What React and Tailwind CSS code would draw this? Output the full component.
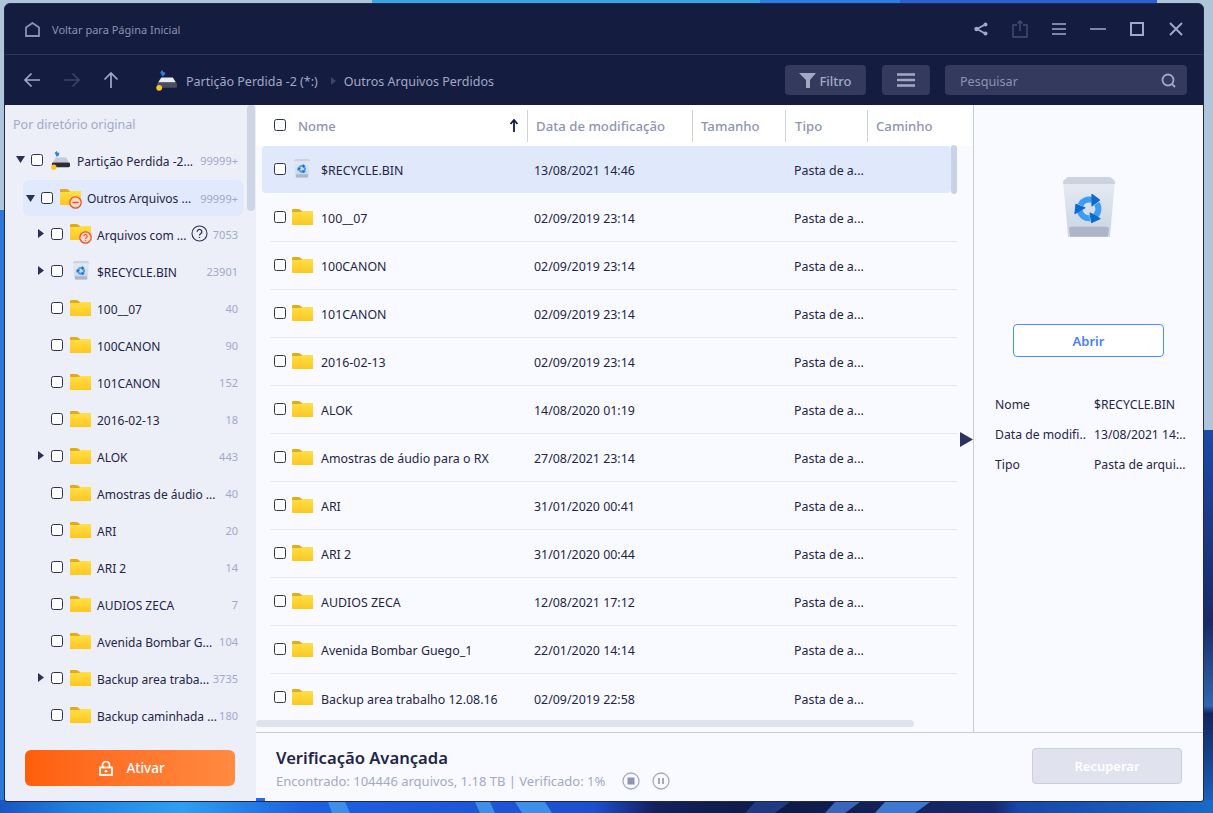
import React from 'react'

const font = { fontFamily: '"Noto Sans", sans-serif' }

const treeRows = [
  { name: 'Arquivos com ...', count: '7053', arrow: true, icon: 'question', help: true },
  { name: '$RECYCLE.BIN', count: '23901', arrow: true, icon: 'bin' },
  { name: '100__07', count: '40' },
  { name: '100CANON', count: '90' },
  { name: '101CANON', count: '152' },
  { name: '2016-02-13', count: '18' },
  { name: 'ALOK', count: '443', arrow: true },
  { name: 'Amostras de áudio ...', count: '40' },
  { name: 'ARI', count: '20' },
  { name: 'ARI 2', count: '14' },
  { name: 'AUDIOS ZECA', count: '7' },
  { name: 'Avenida Bombar G...', count: '104' },
  { name: 'Backup area traba...', count: '3735', arrow: true },
  { name: 'Backup caminhada ...', count: '180' },
]

const fileRows = [
  { name: '100__07', date: '02/09/2019 23:14' },
  { name: '100CANON', date: '02/09/2019 23:14' },
  { name: '101CANON', date: '02/09/2019 23:14' },
  { name: '2016-02-13', date: '02/09/2019 23:14' },
  { name: 'ALOK', date: '14/08/2020 01:19' },
  { name: 'Amostras de áudio para o RX', date: '27/08/2021 23:14' },
  { name: 'ARI', date: '31/01/2020 00:41' },
  { name: 'ARI 2', date: '31/01/2020 00:44' },
  { name: 'AUDIOS ZECA', date: '12/08/2021 17:12' },
  { name: 'Avenida Bombar Guego_1', date: '22/01/2020 14:14' },
  { name: 'Backup area trabalho 12.08.16', date: '02/09/2019 22:58' },
]

const Wallpaper = () => (
  <svg className="absolute inset-0" width="1213" height="813" viewBox="0 0 1213 813">
    <defs>
      <linearGradient id="right" x1="0" y1="0" x2="0" y2="1">
        <stop offset="0" stopColor="#1b4aa8" />
        <stop offset="0.5" stopColor="#1a2a66" />
        <stop offset="0.72" stopColor="#2f68b0" />
        <stop offset="0.74" stopColor="#12245e" />
        <stop offset="1" stopColor="#1a6ac8" />
      </linearGradient>
      <linearGradient id="floor" x1="0" y1="0" x2="1" y2="0">
        <stop offset="0" stopColor="#1a55c0" />
        <stop offset="0.06" stopColor="#2080e0" />
        <stop offset="0.15" stopColor="#2da0f0" />
        <stop offset="0.25" stopColor="#1e60e0" />
        <stop offset="0.49" stopColor="#1c50d0" />
        <stop offset="0.54" stopColor="#13205a" />
        <stop offset="0.64" stopColor="#0e1a44" />
        <stop offset="0.82" stopColor="#162a70" />
        <stop offset="0.84" stopColor="#1748a8" />
        <stop offset="1" stopColor="#1a6ac8" />
      </linearGradient>
    </defs>
    <rect width="1213" height="813" fill="#afc6da" />
    <rect x="372" width="388" height="4" fill="#3ba3e2" />
    <rect x="760" width="140" height="4" fill="#2a7fe0" />
    <rect x="900" width="257" height="4" fill="#2c5fd0" />
    <rect x="0" y="210" width="5" height="603" fill="#2a78d8" />
    <rect x="1203" y="430" width="10" height="383" fill="url(#right)" />
    <rect x="0" y="800" width="1213" height="13" fill="url(#floor)" />
    <polygon points="328,802 345,802 350,813 332,813" fill="#3f8fe8" />
    <polygon points="475,802 490,802 495,813 480,813" fill="#3f8fe8" />
    <polygon points="515,802 545,802 552,813 522,813" fill="#3f8fe8" />
    <polygon points="745,813 755,802 790,802 775,813" fill="#1f3a80" />
    <polygon points="825,813 835,802 860,802 845,813" fill="#3a66b8" />
    <polygon points="875,813 885,802 930,802 915,813" fill="#3f78d0" />
  </svg>
)

const Folder = () => (
  <svg width="21" height="16" viewBox="0 0 21 16" className="shrink-0">
    <defs>
      <linearGradient id="folderBody" x1="0" y1="0" x2="0" y2="1">
        <stop offset="0" stopColor="#ffdf48" />
        <stop offset="1" stopColor="#ffc71f" />
      </linearGradient>
    </defs>
    <path d="M0 1a1 1 0 0 1 1-1h6l3 2v4H0z" fill="#e3ab17" />
    <path d="M0 3h9l1.500-1H21v14H0z" fill="url(#folderBody)" />
  </svg>
)

const BadgeFolder = ({ kind }) => (
  <span className="relative block w-[21px] h-[19px] shrink-0">
    <Folder />
    <svg width="13" height="13" viewBox="0 0 13 13" className="absolute left-[9px] top-[7px]">
      <circle cx="6.500" cy="6.500" r="5.700" fill="#fbd9c4" stroke="#e8552a" strokeWidth="1.300" />
      {kind === 'minus' ? (
        <path d="M3.500 6.500h6" stroke="#e8552a" strokeWidth="1.500" />
      ) : (
        <path d="M4.800 5.200a1.700 1.700 0 1 1 2.500 1.500c-.6.300-.8.600-.8 1.200M6.500 9.300v.8" stroke="#e8552a" strokeWidth="1.200" fill="none" />
      )}
    </svg>
  </span>
)

const RecycleArrow = ({ angle }) => (
  <g transform={`rotate(${angle} 26 32)`}>
    <path d="M17.400 28A9.500 9.500 0 0 1 29.200 23.100" fill="none" stroke="#3d9cf5" strokeWidth="6" />
    <path d="M29 17.500l7.500 5.500-7.500 6z" fill="#0b6ad2" stroke="#0b6ad2" strokeWidth="1.200" strokeLinejoin="round" />
  </g>
)

const RecycleBin = ({ size = 18 }) => (
  <svg width={size} height={size * 1.15} viewBox="0 0 52 60" className="shrink-0">
    <defs>
      <linearGradient id="binBody" x1="0" y1="0" x2="0" y2="1">
        <stop offset="0" stopColor="#e6edf4" />
        <stop offset="1" stopColor="#ccd3e2" />
      </linearGradient>
    </defs>
    <path d="M0 4l5-4h42l5 4-5 56H5z" fill="url(#binBody)" />
    <path d="M0 4l5-4h42l5 4v3H0z" fill="#ccd2e0" />
    <path d="M6 52a2 2 0 0 1 2-2h36a2 2 0 0 1 2 2l-1 8H7z" fill="#aeb5c6" />
    <RecycleArrow angle={0} />
    <RecycleArrow angle={120} />
    <RecycleArrow angle={240} />
  </svg>
)

const Drive = ({ w = 21, dark = false }) => (
  <svg width={w} height={w} viewBox="0 0 21 21" className="shrink-0">
    <path d="M5 3l2-2 1 2 2 0-1 3-2 1-1-2z" fill="#2d7fe0" />
    <path d="M3 13l3-5h11l3 5z" fill={dark ? '#c6cad8' : '#e8ebf2'} />
    <rect x="2" y="13" width="19" height="5" rx="1.500" fill={dark ? '#2a2c38' : '#4a4e5c'} />
    <circle cx="4" cy="18" r="2.800" fill="#ffc51f" />
  </svg>
)

const Check = () => (
  <span className="block w-[12px] h-[12px] shrink-0 rounded-[2.500px] border border-[#2b3154] bg-white" />
)

const Arrow = ({ dir }) => (
  <span className="w-[9px] h-[9px] shrink-0 flex items-center justify-center">
    {dir === 'down' ? (
      <svg width="9" height="7" viewBox="0 0 9 7"><path d="M0 0h9L4.500 7z" fill="#2b3154" /></svg>
    ) : (
      <svg width="6" height="9" viewBox="0 0 6 9"><path d="M0 0l6 4.500L0 9z" fill="#2b3154" /></svg>
    )}
  </span>
)

const Count = ({ children }) => (
  <span className="ml-auto shrink-0 translate-y-[2px] text-[11px] text-[#a3a8c9]">{children}</span>
)

const Sidebar = () => (
  <aside className="relative w-[251px] shrink-0 flex flex-col bg-[#eceff8]">
    <div className="h-[37px] shrink-0 flex items-center pt-[4px] pl-[8px] text-[12.500px] text-[#a3a8c9]">Por diretório original</div>
    <div className="flex-1 overflow-hidden">
      {/* Root */}
      <div className="h-[37px] flex items-center pb-[2px] pl-[11px] pr-[18px] text-[12px] text-[#1f2547]">
        <Arrow dir="down" />
        <span className="ml-[6px]"><Check /></span>
        <span className="ml-[7px]"><Drive w={20} dark /></span>
        <span className="ml-[7px] truncate translate-y-[2px]">Partição Perdida -2...</span>
        <Count>99999+</Count>
      </div>
      <div className="h-[36px] mt-[1px] ml-[18px] mr-[13px] flex items-center pl-[3px] pr-[5px] rounded-md bg-[#e0eafc] text-[12px] text-[#1f2547]">
        <Arrow dir="down" />
        <span className="ml-[6px]"><Check /></span>
        <span className="ml-[7px]"><BadgeFolder kind="minus" /></span>
        <span className="ml-[6px] truncate translate-y-px">Outros Arquivos ...</span>
        <span className="ml-auto shrink-0 translate-y-px text-[11px] text-[#a3a8c9]">99999+</span>
      </div>
      {treeRows.map((row) => (
        <div key={row.name} className="h-[37px] flex items-center pb-[2px] pl-[31px] pr-[18px] text-[12px] text-[#1f2547]">
          <span className="w-[9px] shrink-0">{row.arrow && <Arrow dir="right" />}</span>
          <span className="ml-[6px]"><Check /></span>
          <span className="ml-[7px] w-[21px] flex justify-center shrink-0">
            {row.icon === 'question' ? <BadgeFolder kind="question" /> : row.icon === 'bin' ? <RecycleBin size={16} /> : <Folder />}
          </span>
          <span className="ml-[6px] whitespace-nowrap translate-y-[2px]">{row.name}</span>
          {row.help && (
            <svg width="17" height="17" viewBox="0 0 17 17" className="ml-[4px] shrink-0">
              <circle cx="8.500" cy="8.500" r="7.500" fill="none" stroke="#2b3154" strokeWidth="1.100" />
              <path d="M6.200 6.700a2.300 2.300 0 1 1 3.500 2c-.8.500-1.200.9-1.200 1.800M8.500 12v1" fill="none" stroke="#2b3154" strokeWidth="1.300" />
            </svg>
          )}
          <Count>{row.count}</Count>
        </div>
      ))}
    </div>
    <div className="shrink-0 px-[20px] pb-[15px]">
      <button className="w-[210px] h-[36px] pl-[4px] flex items-center justify-center gap-[13px] rounded-md bg-gradient-to-r from-[#ff5e08] to-[#ff8a40] text-white text-[13.500px] font-medium">
        <svg width="14" height="15" viewBox="0 0 14 15">
          <path d="M3.500 6V4a3.500 3.500 0 0 1 7 0v2" fill="none" stroke="#fff" strokeWidth="1.700" />
          <rect x="1" y="6.500" width="12" height="7.500" fill="none" stroke="#fff" strokeWidth="1.800" />
          <circle cx="7" cy="10.200" r="1.300" fill="#fff" />
        </svg>
        Ativar
      </button>
    </div>
    <div className="absolute right-[1px] top-0 w-[8px] h-[106px] rounded bg-[#cdd5e4]" />
  </aside>
)

const FileRow = ({ row }) => (
  <div className="h-[48px] ml-[14px] w-[687px] pl-[4px] pb-[2px] flex items-center border-b border-[#e6e9f2] last:border-b-0 text-[12.400px] text-[#1f2547]">
    <Check />
    <span className="ml-[6px]"><Folder /></span>
    <span className="ml-[8px] w-[213px] whitespace-nowrap translate-y-[3px]">{row.name}</span>
    <span className="w-[260px] translate-y-[3px]">{row.date}</span>
    <span className="translate-y-[3px]">Pasta de a...</span>
  </div>
)

const FileList = () => (
  <div className="w-[717px] shrink-0 flex flex-col relative">
    <div className="h-[41px] shrink-0 flex items-center bg-white">
      <span className="ml-[18px] -translate-y-px"><Check /></span>
      <div className="ml-[12px] w-[229px] flex items-center justify-between pr-[8px] text-[13px] font-medium text-[#8e95b2]">
        <span className="translate-y-px">Nome</span>
        <svg width="10" height="13" viewBox="0 0 10 13">
          <path d="M5 13V2M1.500 5L5 1l3.500 4" fill="none" stroke="#141c40" strokeWidth="1.800" />
        </svg>
      </div>
      <div className="w-[165px] h-[32px] flex items-center pt-[2px] pl-[8px] border-l border-[#ccd2e2] text-[13.200px] font-medium text-[#8e95b2] whitespace-nowrap">Data de modificação</div>
      <div className="w-[93px] h-[32px] flex items-center pt-[2px] pl-[8px] border-l border-[#ccd2e2] text-[13.200px] font-medium text-[#8e95b2]">Tamanho</div>
      <div className="w-[82px] h-[32px] flex items-center pt-[2px] pl-[9px] border-l border-[#ccd2e2] text-[13.200px] font-medium text-[#8e95b2]">Tipo</div>
      <div className="w-[72px] h-[32px] flex items-center pt-[2px] pl-[8px] border-l border-[#ccd2e2] text-[13.200px] font-medium text-[#8e95b2]">Caminho</div>
    </div>
    <div className="flex-1 overflow-hidden bg-[#f9faff]">
      <div className="h-[47px] mb-[1px] ml-[6px] w-[689px] pl-[12px] pb-[2px] flex items-center rounded bg-[#dfe9fb] text-[12.400px] text-[#1f2547]">
        <Check />
        <span className="ml-[8px] w-[19px]"><RecycleBin size={16} /></span>
        <span className="ml-[8px] w-[213px] translate-y-[3px]">$RECYCLE.BIN</span>
        <span className="w-[260px] translate-y-[3px]">13/08/2021 14:46</span>
        <span className="translate-y-[3px]">Pasta de a...</span>
      </div>
      {fileRows.map((row) => <FileRow key={row.name} row={row} />)}
    </div>
    <div className="absolute left-[695px] top-[40px] w-[6px] h-[49px] rounded bg-[#c9d3e6]" />
    <div className="absolute left-0 bottom-[5px] w-[658px] h-[7px] rounded bg-[#dfe4ec]" />
  </div>
)

const DetailPanel = () => (
  <div className="relative flex-1 border-l border-[#c5ccdc] bg-[#f9faff] flex flex-col items-center">
    <div className="mt-[72px]"><RecycleBin size={52} /></div>
    <button className="mt-[87px] w-[151px] h-[33px] pt-[2px] rounded-[4px] border border-[#4d8cff] bg-white text-[13px] font-semibold text-[#4480fb]">Abrir</button>
    <div className="mt-[32px] w-full pl-[21px] text-[12.200px] text-[#1f2547]">
      <div className="h-[30px] pt-[2px] flex items-center"><span className="w-[99px]">Nome</span><span>$RECYCLE.BIN</span></div>
      <div className="h-[30px] pt-[2px] flex items-center"><span className="w-[99px]">Data de modifi..</span><span>13/08/2021 14:..</span></div>
      <div className="h-[30px] pt-[2px] flex items-center"><span className="w-[99px]">Tipo</span><span>Pasta de arqui...</span></div>
    </div>
    <svg width="13" height="15" viewBox="0 0 13 15" className="absolute left-[-14px] top-[327px]">
      <path d="M0 0l13 7.500L0 15z" fill="#2b3360" />
    </svg>
  </div>
)

const TitleBar = () => (
  <div className="h-[51px] shrink-0 flex items-center border-b border-[#2d3558] pl-[20px] pr-[19px]">
    <svg width="15" height="15" viewBox="0 0 15 15">
      <path d="M1 14V5.500L7.500 1 14 5.500V14z" fill="none" stroke="#8d92b0" strokeWidth="1.800" />
    </svg>
    <span className="ml-[12px] translate-y-px text-[11px] text-[#8d92b0]">Voltar para Página Inicial</span>
    <div className="ml-auto flex items-center gap-[23px]">
      <svg width="16" height="16" viewBox="0 0 16 16">
        <path d="M13 3L4 8l9 5" fill="none" stroke="#a3a8c4" strokeWidth="1.800" />
        <circle cx="12.500" cy="3.500" r="2" fill="#a3a8c4" /><circle cx="3.500" cy="8" r="2.200" fill="#a3a8c4" /><circle cx="12.500" cy="12.500" r="2" fill="#a3a8c4" />
      </svg>
      <svg width="16" height="18" viewBox="0 0 16 18">
        <path d="M5 5H1v12h14V5h-4M8 11V1M5.500 3.500L8 1l2.500 2.500" fill="none" stroke="#464d72" strokeWidth="1.400" />
      </svg>
      <svg width="16" height="16" viewBox="0 0 16 16">
        <path d="M1 3h14M1 8h14M1 13h14" stroke="#a3a8c4" strokeWidth="1.500" />
      </svg>
      <svg width="16" height="16" viewBox="0 0 16 16">
        <path d="M0 8h16" stroke="#a3a8c4" strokeWidth="1.600" />
      </svg>
      <svg width="16" height="16" viewBox="0 0 16 16">
        <rect x="2" y="2" width="12" height="12" fill="none" stroke="#a3a8c4" strokeWidth="2" />
      </svg>
      <svg width="16" height="16" viewBox="0 0 16 16">
        <path d="M2 2l12 12M14 2L2 14" stroke="#a3a8c4" strokeWidth="1.900" />
      </svg>
    </div>
  </div>
)

const NavBar = () => (
  <div className="h-[50px] shrink-0 flex items-center pl-[16px] pr-[16px]">
    <svg width="22" height="22" viewBox="0 0 22 22"><path d="M19 11H4M10.500 4.500L4 11l6.500 6.500" fill="none" stroke="#a3a8c4" strokeWidth="1.700" /></svg>
    <svg width="22" height="22" viewBox="0 0 22 22" className="ml-[18px]"><path d="M3 11h15M11.500 4.500L18 11l-6.500 6.500" fill="none" stroke="#3c4366" strokeWidth="1.700" /></svg>
    <svg width="22" height="22" viewBox="0 0 22 22" className="ml-[17px]"><path d="M11 19V4M4.500 10.500L11 4l6.500 6.500" fill="none" stroke="#a3a8c4" strokeWidth="1.700" /></svg>
    <span className="ml-[33px]"><Drive w={22} /></span>
    <span className="ml-[9px] translate-y-[2px] text-[12.500px] text-[#a3a8c4]">Partição Perdida -2 (*:)</span>
    <svg width="5" height="8" viewBox="0 0 5 8" className="ml-[13px] translate-y-px"><path d="M0 0l5 4-5 4z" fill="#3c4366" /></svg>
    <span className="ml-[8px] translate-y-[2px] text-[12.500px] text-[#a3a8c4]">Outros Arquivos Perdidos</span>
    <button className="ml-auto w-[81px] h-[30px] flex items-center justify-center gap-[2px] rounded bg-[#333a5e] text-[13px] text-[#a3a8c4] font-medium">
      <svg width="18" height="15" viewBox="0 0 18 15"><path d="M0 0h17l-6 7v8H7V7z" fill="#a3a8c4" /></svg>
      <span className="translate-y-[2px]">Filtro</span>
    </button>
    <button className="ml-[16px] w-[48px] h-[30px] flex items-center justify-center rounded bg-[#333a5e]">
      <svg width="18" height="14" viewBox="0 0 18 14"><path d="M0 1.500h18M0 7h18M0 12.500h18" stroke="#a3a8c4" strokeWidth="2.600" /></svg>
    </button>
    <div className="ml-[15px] w-[242px] h-[30px] flex items-center justify-between pl-[15px] pr-[11px] rounded bg-[#333a5e] text-[12.600px] text-[#8d92b0]">
      <span className="translate-y-[2px]">Pesquisar</span>
      <svg width="15" height="15" viewBox="0 0 15 15">
        <circle cx="7" cy="7" r="5.500" fill="none" stroke="#a3a8c4" strokeWidth="1.800" /><path d="M11 11l3 3" stroke="#a3a8c4" strokeWidth="1.800" />
      </svg>
    </div>
  </div>
)

const BottomBar = () => (
  <div className="relative h-[69px] shrink-0 border-t border-[#c5ccdc] bg-[#f9faff] flex items-center justify-between pl-[20px] pr-[21px]">
    <div className="pt-[3px]">
      <div className="text-[16.600px] font-semibold text-[#1f2547] leading-[22px]">Verificação Avançada</div>
      <div className="mt-[3px] flex items-center text-[13px] leading-[18px] text-[#a3a8c9]">
        Encontrado: 104446 arquivos, 1.18 TB | Verificado: 1%
        <svg width="18" height="18" viewBox="0 0 18 18" className="ml-[17px]">
          <circle cx="9" cy="9" r="8" fill="none" stroke="#a3a8c9" strokeWidth="1.300" /><rect x="5.500" y="5.500" width="7" height="7" fill="#8e94b8" />
        </svg>
        <svg width="18" height="18" viewBox="0 0 18 18" className="ml-[12px]">
          <circle cx="9" cy="9" r="8" fill="none" stroke="#a3a8c9" strokeWidth="1.300" /><path d="M7 6v6M11 6v6" stroke="#8e94b8" strokeWidth="1.600" />
        </svg>
      </div>
    </div>
    <button className="w-[150px] h-[36px] pt-[2px] -mt-[2px] rounded border border-[#c8cfe0] bg-[#e0e3ee] text-[13px] font-semibold text-white">Recuperar</button>
    <div className="absolute left-0 bottom-0 w-[9px] h-[3px] bg-[#1a6ef0]" />
  </div>
)

export default function App() {
  return (
    <div className="relative w-[1213px] h-[813px] overflow-hidden pl-[4px] pt-[3px]" style={font}>
      <Wallpaper />
      <div className="relative w-[1200px] h-[799px] flex flex-col rounded-t-md rounded-b-[3px] overflow-hidden border border-[#1f2850] bg-[#141c40]">
        <TitleBar />
        <NavBar />
        <div className="flex-1 min-h-0 flex">
          <Sidebar />
          <div className="flex-1 min-w-0 flex flex-col">
            <div className="flex-1 min-h-0 flex">
              <FileList />
              <DetailPanel />
            </div>
            <BottomBar />
          </div>
        </div>
      </div>
    </div>
  )
}
